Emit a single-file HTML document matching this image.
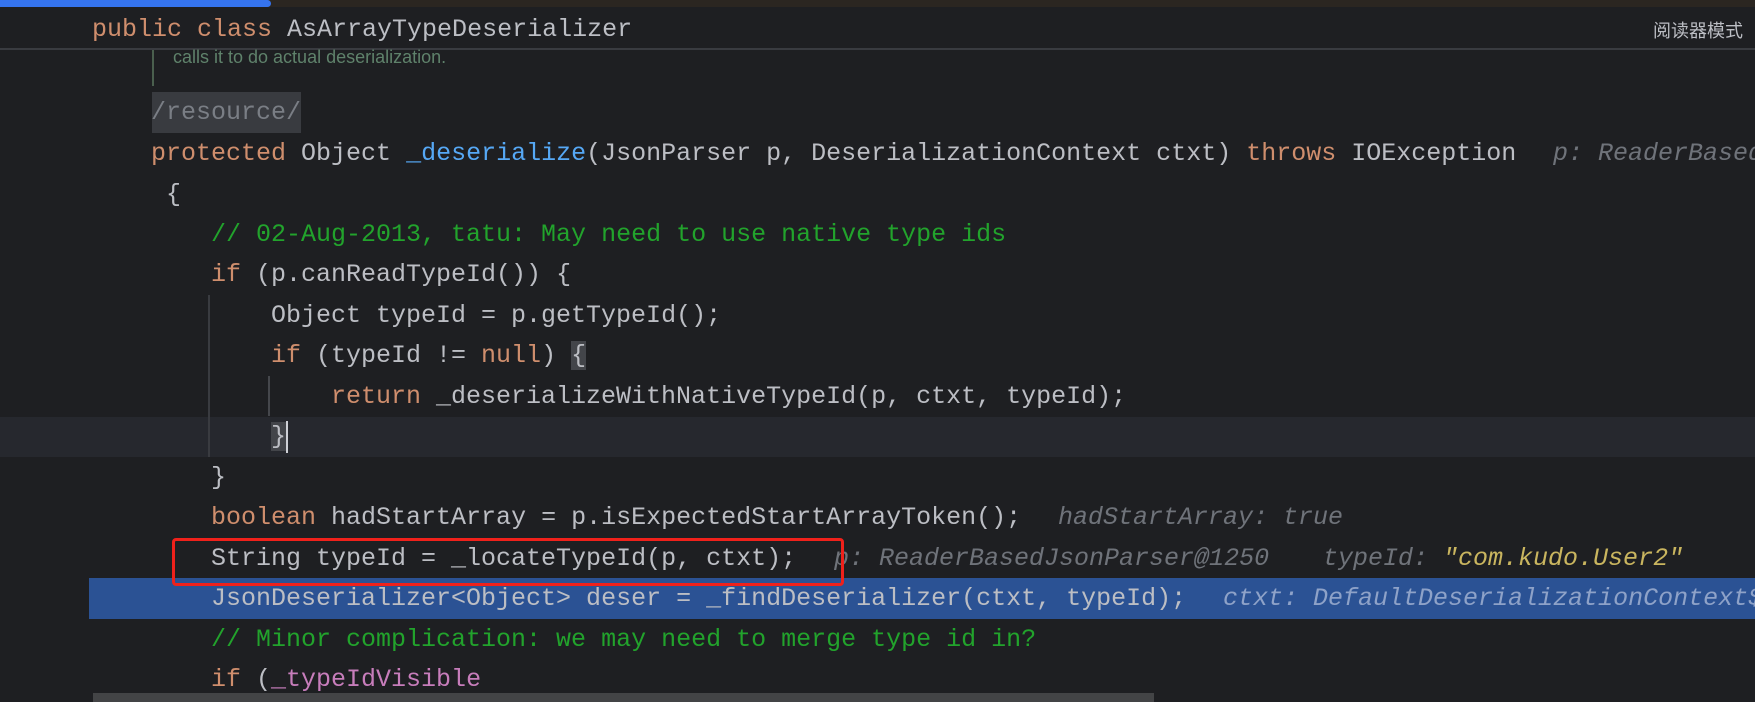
<!DOCTYPE html>
<html><head><meta charset="utf-8"><style>
html,body{margin:0;padding:0;width:1755px;height:702px;overflow:hidden;}
body{background:#1e1f22;font-family:"Liberation Mono",monospace;font-size:25px;color:#bcbec4;}
#w{position:relative;width:1755px;height:702px;overflow:hidden;}
.a{position:absolute;white-space:pre;}
.l{position:absolute;white-space:pre;height:40px;line-height:40px;}
.k{color:#cf8e6d}.m{color:#56a8f5}.c{color:#22a32c}.p{color:#c77dbb}
.h{font-style:italic;color:#6f737a}
.s{font-style:italic;color:#c9b55f}
</style></head><body><div id="w">
<div class="a" style="left:0;top:0;width:1755px;height:7px;background:#2b2621"></div>
<div class="a" style="left:0;top:0;width:271px;height:7px;background:#3574f0;border-radius:0 4px 4px 0"></div>
<div class="a" style="left:0;top:7px;width:1755px;height:41px;background:#1e1f22;border-bottom:2px solid #393b40"></div>
<div class="l" style="left:92px;top:10px;"><span class="k">public class</span> AsArrayTypeDeserializer</div>
<div class="a" style="left:1653px;top:17px;font-family:'Liberation Sans','Noto Sans CJK SC',sans-serif;font-size:18px;color:#bcbec4">阅读器模式</div>

<div class="a" style="left:0;top:417px;width:1755px;height:40px;background:#26282e"></div>
<div class="a" style="left:89px;top:578px;width:1666px;height:41px;background:#2b5294"></div>

<div class="a" style="left:152px;top:50px;width:2px;height:36px;background:#4a5f4e"></div>
<div class="a" style="left:173px;top:47px;font-family:'Liberation Sans',sans-serif;font-size:18px;color:#5f826b">calls it to do actual deserialization.</div>
<div class="a" style="left:152px;top:92px;width:149px;height:41px;background:#393b40"></div>
<div class="l" style="left:151px;top:93px;color:#7a7e85">/resource/</div>

<div class="a" style="left:208px;top:295px;width:2px;height:162px;background:#393b40"></div>
<div class="a" style="left:268px;top:376px;width:2px;height:40px;background:#45474c"></div>

<div class="l" style="left:151px;top:134px;"><span class="k">protected</span> Object <span class="m">_deserialize</span>(JsonParser p, DeserializationContext ctxt) <span class="k">throws</span> IOException</div>
<div class="l h" style="left:1553px;top:134px;">p: ReaderBased</div>
<div class="l" style="left:151px;top:175px;"> {</div>
<div class="l c" style="left:211px;top:215px;">// 02-Aug-2013, tatu: May need to use native type ids</div>
<div class="l" style="left:211px;top:255px;"><span class="k">if</span> (p.canReadTypeId()) {</div>
<div class="l" style="left:271px;top:296px;">Object typeId = p.getTypeId();</div>
<div class="l" style="left:271px;top:336px;"><span class="k">if</span> (typeId != <span class="k">null</span>) <span style="background:#43454a">{</span></div>
<div class="l" style="left:331px;top:377px;"><span class="k">return</span> _deserializeWithNativeTypeId(p, ctxt, typeId);</div>
<div class="l" style="left:271px;top:417px;"><span style="background:#43454a">}</span></div>
<div class="a" style="left:286px;top:421px;width:2px;height:32px;background:#ced0d6"></div>
<div class="l" style="left:211px;top:458px;">}</div>
<div class="l" style="left:211px;top:498px;"><span class="k">boolean</span> hadStartArray = p.isExpectedStartArrayToken();</div>
<div class="l h" style="left:1058px;top:498px;">hadStartArray: true</div>
<div class="l" style="left:211px;top:539px;">String typeId = _locateTypeId(p, ctxt);</div>
<div class="l h" style="left:834px;top:539px;">p: ReaderBasedJsonParser@1250</div>
<div class="l h" style="left:1323px;top:539px;">typeId: <span class="s">"com.kudo.User2"</span></div>
<div class="l" style="left:211px;top:579px;">JsonDeserializer&lt;Object&gt; deser = _findDeserializer(ctxt, typeId);</div>
<div class="l h" style="left:1223px;top:579px;color:#8ea2c8">ctxt: DefaultDeserializationContext$</div>
<div class="l c" style="left:211px;top:620px;">// Minor complication: we may need to merge type id in?</div>
<div class="l" style="left:211px;top:660px;"><span class="k">if</span> (<span class="p">_typeIdVisible</span></div>

<div class="a" style="left:172px;top:538px;width:666px;height:42px;border:3px solid #f0211b;border-radius:4px"></div>
<div class="a" style="left:93px;top:693px;width:1061px;height:9px;background:#434446"></div>
</div></body></html>
